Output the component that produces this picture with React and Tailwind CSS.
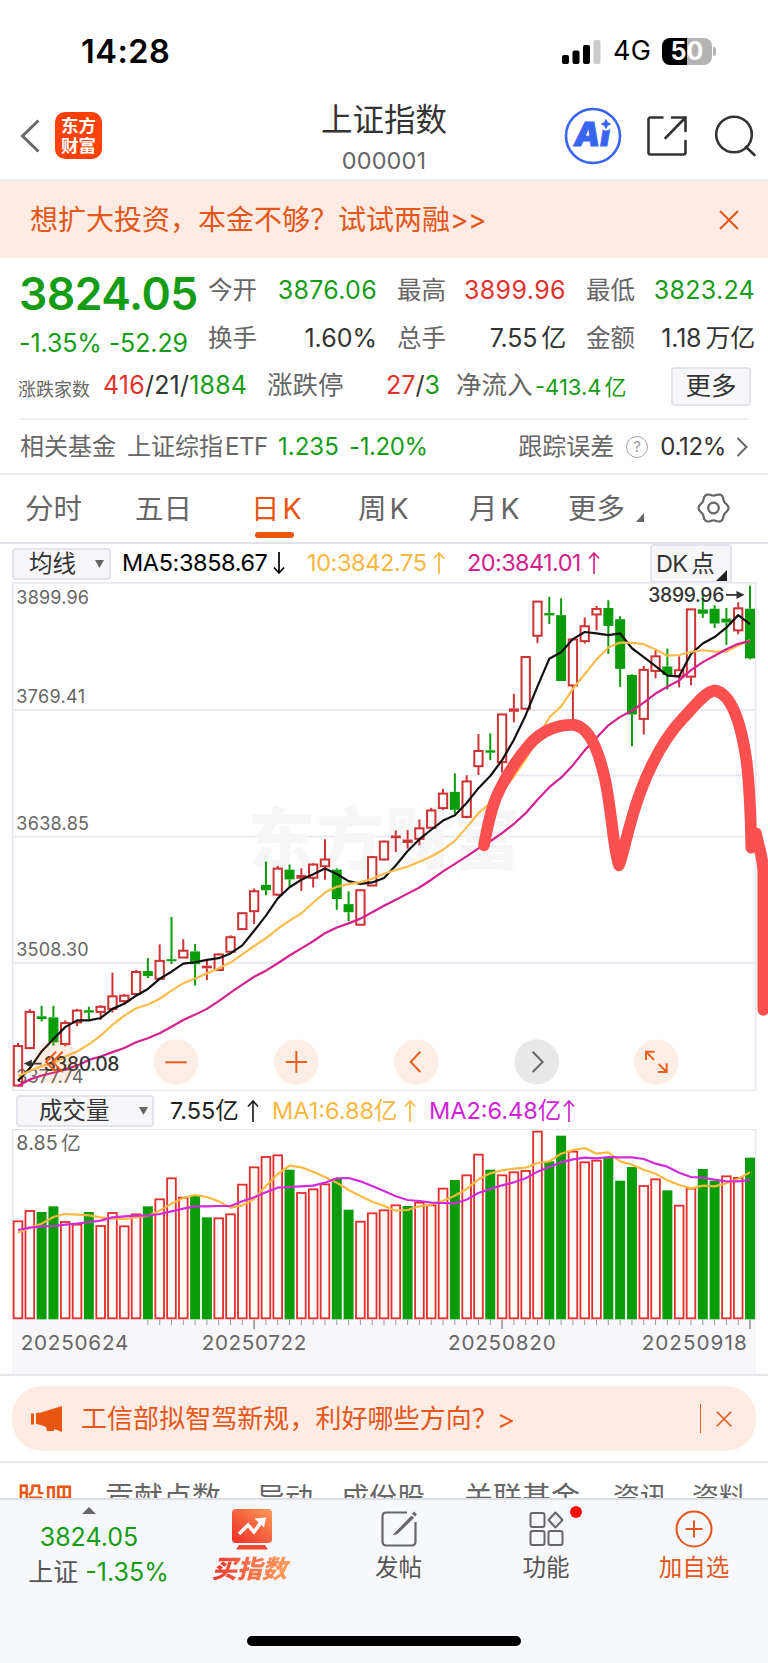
import React from "react";

// chart units: 3 per screen pixel
const STEP = 35.42;
const cx = (i) => 54 + STEP * i;

// [up, high, bodyTop, bodyBottom, low]
const candles = [
  [1, 1400, 1408, 1526, 1526], [1, 1300, 1307, 1415, 1418], [0, 1290, 1321, 1329, 1336],
  [0, 1290, 1324, 1398, 1408], [1, 1333, 1340, 1403, 1410], [1, 1299, 1303, 1339, 1350],
  [0, 1293, 1303, 1310, 1329], [1, 1288, 1292, 1308, 1332], [1, 1192, 1261, 1299, 1310],
  [1, 1255, 1259, 1276, 1288], [1, 1184, 1189, 1255, 1255], [0, 1149, 1187, 1202, 1208],
  [1, 1108, 1156, 1210, 1210], [0, 1027, 1152, 1158, 1166], [1, 1093, 1126, 1147, 1147],
  [0, 1107, 1129, 1167, 1230], [1, 1155, 1171, 1179, 1214], [1, 1135, 1137, 1184, 1184],
  [1, 1081, 1086, 1130, 1130], [1, 1013, 1015, 1063, 1063], [1, 943, 950, 1010, 1048],
  [0, 863, 932, 948, 963], [1, 876, 883, 961, 965], [0, 872, 887, 916, 937],
  [1, 883, 903, 914, 950], [1, 868, 871, 911, 940], [1, 797, 856, 877, 917],
  [0, 883, 887, 974, 1006], [0, 951, 989, 1013, 1040], [1, 946, 947, 1050, 1050],
  [1, 848, 849, 934, 934], [1, 801, 803, 857, 860], [1, 771, 786, 794, 835],
  [1, 770, 798, 808, 825], [1, 739, 764, 796, 815], [1, 704, 711, 763, 763],
  [1, 648, 661, 705, 710], [0, 602, 657, 710, 722], [1, 608, 625, 731, 735],
  [1, 486, 535, 581, 607], [0, 484, 534, 541, 563], [1, 427, 427, 569, 600],
  [1, 367, 410, 420, 451], [1, 257, 257, 411, 411], [1, 93, 93, 195, 217],
  [0, 80, 128, 135, 160], [0, 84, 134, 329, 329], [1, 205, 205, 342, 450],
  [1, 141, 166, 211, 218], [1, 107, 115, 132, 179], [0, 90, 113, 166, 249],
  [0, 137, 146, 293, 346], [0, 309, 311, 428, 522], [1, 284, 295, 441, 487],
  [1, 237, 255, 299, 321], [0, 233, 286, 311, 354], [1, 256, 296, 315, 348],
  [1, 116, 116, 316, 342], [0, 72, 117, 130, 142], [0, 105, 115, 159, 172],
  [0, 113, 144, 156, 222], [1, 96, 113, 179, 191], [0, 47, 115, 262, 265],
];

const ma5 = [
  1512, 1475, 1425, 1388, 1353, 1333, 1333, 1326, 1299, 1284, 1260, 1240, 1210, 1189, 1165, 1161,
  1154, 1149, 1135, 1111, 1068, 1023, 972, 939, 917, 901, 884, 900, 921, 929, 925, 912, 875, 832,
  797, 769, 742, 726, 690, 646, 610, 563, 503, 430, 345, 263, 244, 205, 184, 188, 193, 188, 232,
  258, 285, 313, 315, 249, 218, 199, 171, 134, 161,
];
const ma10 = [
  1498, 1483, 1468, 1460, 1440, 1425, 1404, 1378, 1346, 1319, 1297, 1287, 1269, 1245, 1223, 1209,
  1194, 1179, 1162, 1138, 1113, 1090, 1062, 1038, 1016, 985, 955, 938, 930, 924, 914, 899, 888,
  878, 864, 848, 828, 802, 762, 720, 690, 655, 612, 560, 495, 437, 404, 352, 309, 265, 230, 215,
  216, 220, 236, 254, 252, 243, 238, 242, 242, 224, 208,
];
const ma20 = [
  1527, 1508, 1496, 1488, 1478, 1467, 1450, 1440, 1427, 1415, 1398, 1386, 1371, 1352, 1332, 1316,
  1299, 1276, 1251, 1227, 1204, 1186, 1164, 1141, 1120, 1099, 1075, 1058, 1046, 1032, 1013, 994,
  976, 958, 940, 917, 892, 870, 848, 824, 803, 779, 752, 720, 680, 643, 615, 578, 534, 497, 460,
  435, 417, 393, 366, 346, 327, 297, 273, 254, 235, 219, 211,
];

// [up, top]
const volumes = [
  [1, 422], [1, 391], [0, 397], [0, 380], [1, 424], [1, 432], [0, 397], [1, 436], [1, 397],
  [1, 437], [1, 401], [0, 380], [1, 356], [1, 293], [1, 351], [0, 349], [0, 413], [1, 413],
  [1, 401], [1, 312], [1, 260], [1, 229], [1, 224], [0, 270], [1, 337], [1, 326], [1, 311],
  [0, 297], [0, 390], [1, 423], [1, 398], [1, 389], [1, 374], [0, 379], [1, 366], [1, 374],
  [1, 324], [0, 301], [1, 284], [1, 222], [0, 270], [1, 284], [1, 275], [1, 271], [1, 153],
  [0, 245], [0, 168], [1, 213], [1, 245], [1, 240], [0, 234], [0, 303], [0, 262], [1, 316],
  [1, 296], [0, 332], [1, 375], [1, 324], [0, 268], [0, 303], [1, 287], [1, 292], [0, 234],
];
const volMa1 = [
  458, 443, 431, 411, 402, 404, 406, 412, 416, 417, 412, 408, 392, 371, 354, 345, 351, 364, 383,
  376, 357, 318, 282, 257, 262, 275, 291, 308, 330, 348, 365, 377, 392, 390, 379, 374, 362, 347,
  327, 298, 280, 271, 266, 263, 249, 244, 221, 210, 204, 221, 217, 244, 254, 269, 281, 301, 315,
  325, 317, 319, 310, 296, 277,
];
const volMa2 = [
  450, 443, 439, 438, 434, 431, 426, 422, 412, 409, 407, 407, 402, 394, 386, 379, 379, 378, 378,
  364, 352, 337, 323, 321, 319, 317, 308, 295, 294, 304, 318, 333, 349, 360, 363, 368, 369, 370,
  359, 339, 327, 316, 307, 295, 275, 261, 247, 238, 233, 235, 231, 232, 232, 237, 251, 260, 278,
  291, 293, 299, 304, 304, 300,
];

const points = (arr) => arr.map((y, i) => `${cx(i)},${y}`).join(" ");

// six-lobed outline of the settings icon
const gear = Array.from({ length: 72 }, (_, i) => {
  const a = (i * Math.PI) / 36;
  const r = 13.7 + 1.3 * Math.cos(6 * a);
  return `${16 + r * Math.cos(a)},${16 + r * Math.sin(a)}`;
}).join(" ");

function Line({ data, color }) {
  return (
    <polyline points={points(data)} fill="none" stroke={color} strokeWidth="6.5" strokeLinejoin="round" />
  );
}

function Candle({ i, c }) {
  const [up, hi, top, bottom, lo] = c;
  const x = cx(i);
  const flat = bottom - top < 13;
  const color = up ? "#cc3335" : "#0a9d09";
  return (
    <g stroke={color} strokeWidth="6">
      <line x1={x} x2={x} y1={hi} y2={top} />
      <line x1={x} x2={x} y1={bottom} y2={lo} />
      {up && !flat ? (
        <rect x={x - 12.5} y={top + 1} width="25" height={bottom - top - 1} fill="none" />
      ) : (
        <rect x={x - 15} y={top} width="30" height={bottom - top} fill={color} stroke="none" />
      )}
    </g>
  );
}

function Arrow({ down, className }) {
  return (
    <svg viewBox="0 0 12 22" className={"w-3 h-[22px] shrink-0 " + className} fill="none" stroke="currentColor" strokeWidth="1.7">
      <path d={down ? "M6 0v20.5M1 15.5l5 5.500 5-5.500" : "M6 22V1.500M1 6.500L6 1l5 5.500"} />
    </svg>
  );
}

function Close({ className }) {
  return (
    <svg viewBox="0 0 20 20" className={"shrink-0 " + className} fill="none" stroke="#e3571a" strokeWidth="2">
      <path d="M1 1l18 18M19 1L1 19" />
    </svg>
  );
}

function StatusBar() {
  return (
    <div className="h-[88px] pt-[30px] pl-[81px] pr-[52px] flex items-start justify-between text-black">
      <span className="text-[32.5px] leading-[44px] font-semibold tracking-[0.5px]">14:28</span>
      <div className="flex items-center h-[43px]">
        <svg viewBox="0 0 39 24" className="w-[39px] h-6">
          <rect x="0" y="15" width="7" height="9" rx="2" />
          <rect x="10.5" y="10.5" width="7" height="13.5" rx="2" />
          <rect x="21" y="5" width="7" height="19" rx="2" />
          <rect x="31.5" y="0" width="7" height="24" rx="2" fill="#cbcbcb" />
        </svg>
        <span className="ml-3 w-[49px] text-[27px] tracking-[0.2px]">4G</span>
        <div className="w-[50px] h-[27px] rounded-[8px] bg-linear-to-r from-black from-50% to-[#b4b4b4] to-50% text-white text-[25px] leading-[27px] font-bold text-center">
          50
        </div>
        <div className="ml-[1px] w-[3px] h-[9px] rounded-r-full bg-[#b4b4b4]" />
      </div>
    </div>
  );
}

function Header() {
  return (
    <div className="h-[93px] border-b-2 border-[#f0edf0] flex">
      <div className="w-[280px] pl-[20px] pt-[24px] flex">
        <svg viewBox="0 0 20 34" className="w-5 h-[34px] mt-[7px]" fill="none" stroke="#6a6a6a" strokeWidth="3">
          <path d="M18.5 1.5L2.5 17l16 15.5" />
        </svg>
        <div className="ml-[15px] w-[47px] h-[47px] rounded-[10px] bg-[#fe4207] text-white text-[17.5px] leading-[19.5px] font-bold text-center pt-[4px]">
          东方
          <br />
          财富
        </div>
      </div>
      <div className="w-[208px] pt-[9px] text-center">
        <div className="text-[31.5px] leading-[46px] text-[#333]">上证指数</div>
        <div className="text-[23.5px] leading-[36px] text-[#666] tracking-[0.1px]">000001</div>
      </div>
      <div className="flex-1 flex pt-[19px] pl-[76px]">
        <svg viewBox="0 0 58 58" className="w-[58px] h-[58px]">
          <circle cx="29" cy="29" r="27" fill="none" stroke="#3864f0" strokeWidth="2.6" />
          <text x="10" y="39" fontSize="33" fontWeight="900" fontStyle="italic" fill="#3864f0" stroke="#3864f0" strokeWidth="0.8" textLength="36">
            Ai
          </text>
          <circle cx="42" cy="17" r="6.500" fill="#fff" />
          <path d="M42 12.500l1.500 3 3 1.500-3 1.500-1.500 3-1.500-3-3-1.500 3-1.500z" fill="#3864f0" stroke="#3864f0" />
        </svg>
        <svg viewBox="0 0 40 40" className="w-10 h-10 mt-[9px] ml-[25px]" fill="none" stroke="#333" strokeWidth="2.6" strokeLinecap="round">
          <path d="M15.500 1.500H3.500a2 2 0 0 0-2 2v33a2 2 0 0 0 2 2h33a2 2 0 0 0 2-2V25M38.500 15V1.500H25M38.500 1.500L18.500 22" />
        </svg>
        <svg viewBox="0 0 42 42" className="w-[42px] h-[42px] mt-[8px] ml-[28px]" fill="none" stroke="#333" strokeWidth="2.6" strokeLinecap="round">
          <circle cx="19" cy="19.500" r="17.800" />
          <path d="M31 32l8.500 8" />
        </svg>
      </div>
    </div>
  );
}

function Stat({ label, value, color, unit }) {
  return (
    <div className="flex justify-between">
      <span className="text-[#666] text-[24.500px]">{label}</span>
      <span className={color}>
        {value}
        {unit && <span className="ml-1">{unit}</span>}
      </span>
    </div>
  );
}

function Quote() {
  return (
    <div className="h-[217px] border-b-2 border-[#ececf0] text-[25px]">
      <div className="flex h-[106px] pl-[19px] pr-[13px]">
        <div className="w-[189px] text-[#159c15]">
          <div className="text-[44.500px] leading-[56px] pt-[8px] font-semibold tracking-[-0.500px]">3824.05</div>
          <div className="leading-[36px] mt-[3px] whitespace-nowrap tracking-[-0.100px]">-1.35% -52.29</div>
        </div>
        <div className="w-[547px] pt-[14px] grid grid-cols-[169px_169px_169px] gap-x-5 content-start leading-[36px] gap-y-[12px] whitespace-nowrap">
          <Stat label="今开" value="3876.06" color="text-[#159c15] tracking-[0.300px]" />
          <Stat label="最高" value="3899.96" color="text-[#e0322c] tracking-[0.400px]" />
          <Stat label="最低" value="3823.24" color="text-[#159c15] tracking-[0.300px]" />
          <Stat label="换手" value="1.60%" color="text-[#333]" />
          <Stat label="总手" value="7.55" unit="亿" color="text-[#333] tracking-[-0.200px]" />
          <Stat label="金额" value="1.18" unit="万亿" color="text-[#333] tracking-[-0.200px]" />
        </div>
      </div>
      <div className="flex h-[54px] pl-[18px] leading-[36px] pt-[3px] whitespace-nowrap">
        <span className="w-[85px] text-[18px] leading-[46px] text-[#666]">涨跌家数</span>
        <span className="w-[164px] tracking-[0.200px] text-[#333]">
          <b className="font-normal text-[#e0322c]">416</b>/21/<b className="font-normal text-[#159c15]">1884</b>
        </span>
        <span className="w-[119px] text-[25.500px] text-[#666]">涨跌停</span>
        <span className="w-[70px] text-[#333]">
          <b className="font-normal text-[#e0322c]">27</b>/<b className="font-normal text-[#159c15]">3</b>
        </span>
        <span className="w-[79px] text-[25.500px] text-[#666]">净流入</span>
        <span className="w-[136px] text-[22px] leading-[41px] text-[#159c15]">
          -413.4<span className="ml-[3px]">亿</span>
        </span>
        <span className="w-[80px] h-[39px] rounded-[4px] border-2 border-[#e2e4ec] bg-[#f7f7fa] text-[25.500px] leading-[34px] text-center text-[#333]">
          更多
        </span>
      </div>
      <div className="mx-5 h-[55px] border-t-2 border-[#efeff2] flex items-center text-[24px] text-[#666] whitespace-nowrap">
        <span className="w-[107px]">相关基金</span>
        <span className="w-[151px]">
          上证综指<span className="ml-[2px] tracking-[-0.500px]">ETF</span>
        </span>
        <span className="w-[71px] text-[#159c15]">1.235</span>
        <span className="text-[#159c15] tracking-[-0.400px]">-1.20%</span>
        <span className="ml-auto">跟踪误差</span>
        <span className="ml-[12px] w-[22px] h-[22px] rounded-full border-[1.500px] border-[#a5a5a5] text-[#999] text-[15px] leading-[19px] text-center">?</span>
        <span className="ml-3 text-[#333] tracking-[-0.300px]">0.12%</span>
        <svg viewBox="0 0 12 20" className="ml-[10px] w-3 h-5" fill="none" stroke="#666" strokeWidth="2">
          <path d="M1.500 1l9 9-9 9" />
        </svg>
      </div>
    </div>
  );
}

function Tabs() {
  return (
    <div className="h-[69px] border-b-2 border-[#dfe0ea] flex text-[28.500px] leading-[67px] text-[#666] whitespace-nowrap">
      <span className="w-[110px] ml-[25px]">分时</span>
      <span className="w-[116px]">五日</span>
      <div className="w-[107px] text-[#e8560f]">
        <div className="h-[57px]">
          日<span className="ml-[3px]">K</span>
        </div>
        <div className="ml-1 w-[39px] h-[6px] rounded-full bg-[#e8560f]" />
      </div>
      <span className="w-[111px]">
        周<span className="ml-[3px]">K</span>
      </span>
      <span className="w-[99px]">
        月<span className="ml-[3px]">K</span>
      </span>
      <span className="w-[68px]">更多</span>
      <svg viewBox="0 0 8 9" className="w-2 h-[9px] mt-[38px]" fill="#666">
        <path d="M8 0v9H0z" />
      </svg>
      <svg viewBox="0 0 32 32" className="w-[33px] h-8 ml-[53px] mt-[17px]" fill="none" stroke="#666" strokeWidth="2.200">
        <polygon points={gear} />
        <circle cx="16" cy="16" r="5.300" />
      </svg>
    </div>
  );
}

function Indicators() {
  return (
    <div className="h-[38px] flex text-[23.500px] leading-[38px] whitespace-nowrap">
      <div className="ml-3 mt-1 w-[99px] h-[32px] rounded-[4px] border-2 border-[#e2e4ec] bg-[#f7f7fa] flex items-center text-[#333]">
        <span className="ml-[15px] w-[66px]">均线</span>
        <svg viewBox="0 0 9 8" className="w-[9px] h-2" fill="#666">
          <path d="M0 0h9L4.500 8z" />
        </svg>
      </div>
      <span className="ml-[11px] w-[151px] text-black tracking-[-0.400px]">MA5:3858.67</span>
      <Arrow down className="mt-[8px] text-black" />
      <span className="ml-[22px] w-[126px] text-[#f8b741] tracking-[-0.400px]">10:3842.75</span>
      <Arrow className="mt-[8px] text-[#f8b741]" />
      <span className="ml-[22px] w-[121px] text-[#d41f8d] tracking-[-0.600px]">20:3841.01</span>
      <Arrow className="mt-[8px] text-[#d41f8d]" />
      <div className="ml-[50px] w-[82px] h-[39px] rounded-[4px] border-2 border-[#e2e4ec] bg-[#f7f7fa] flex text-[#333]">
        <span className="ml-1 w-[60px] leading-[36px] tracking-[-0.700px]">
          DK<span className="ml-1">点</span>
        </span>
        <svg viewBox="0 0 11 11" className="w-[11px] h-[11px] mt-[24px]" fill="#222">
          <path d="M11 0v11H0z" />
        </svg>
      </div>
    </div>
  );
}

function PriceChart() {
  return (
    <svg viewBox="0 36 2304 1506" preserveAspectRatio="none" className="block w-[768px] h-[509px]">
      <g stroke="#e8e8f1" strokeWidth="5" fill="none">
        <rect x="38" y="38.500" width="2229" height="1502" />
        <path d="M38 415H2267M38 789H2267M38 1163H2267M1400 608H2267" />
      </g>
      <text x="745" y="871" fontSize="200" fontWeight="900" fill="#f6f6f7" textLength="815">东方财富</text>

      <g fontSize="54" fill="#666">
        <text x="49" y="100" textLength="218">3899.96</text>
        <text x="49" y="395" textLength="206">3769.41</text>
        <text x="49" y="769" textLength="218">3638.85</text>
        <text x="49" y="1144" textLength="217">3508.30</text>
        <text x="49" y="1518" textLength="201">3377.74</text>
      </g>

      {candles.map((c, i) => (
        <Candle key={i} i={i} c={c} />
      ))}
      <Line data={ma5} color="#111" />
      <Line data={ma10} color="#fbbc4b" />
      <Line data={ma20} color="#d5208f" />

      <g fontSize="58" fontWeight="500" fill="#333">
        <text x="1945" y="95" textLength="228">3899.96</text>
        <text x="131" y="1483" textLength="227">3380.08</text>
      </g>
      <g stroke="#333" strokeWidth="5" fill="#333">
        <path d="M2178 74H2220M125 1461H85" />
        <path d="M2212 66L2228 74L2212 82zM93 1453L77 1461L93 1469z" />
      </g>

      {/* toolbar */}
      <g fill="#f0742c" fillOpacity="0.12">
        <circle cx="168" cy="1456" r="67" />
        <circle cx="528" cy="1456" r="67" />
        <circle cx="889" cy="1456" r="67" />
        <circle cx="1249" cy="1456" r="67" />
        <circle cx="1610" cy="1456" r="67" fill="#222" fillOpacity="0.1" />
        <circle cx="1969" cy="1456" r="67" />
      </g>
      <g stroke="#e8601f" strokeWidth="6" fill="none">
        <path d="M168 1426L138 1456L168 1486M188 1426L158 1456L188 1486" />
        <path d="M496 1457H560" />
        <path d="M857 1456H921M889 1424V1488" />
        <path d="M1261 1426L1232 1456L1261 1486" />
        <path d="M1598 1426L1628 1456L1598 1486" stroke="#666" />
        <path d="M1938 1450V1426H1964M1938 1426L1962 1450M1974 1486H2000V1460M2000 1486L1976 1462" />
      </g>

      <g stroke="#fb5050" strokeWidth="35" strokeLinecap="round" strokeLinejoin="round" fill="none">
        <path d="M1452 815C1462 760 1472 710 1492 665C1520 605 1555 555 1590 515C1630 472 1680 458 1722 459C1770 466 1797 540 1815 620C1835 710 1840 830 1857 874C1874 830 1880 770 1920 660C1950 580 1990 500 2050 438C2085 402 2115 362 2142 357C2192 362 2222 450 2238 555C2250 640 2252 720 2254 822" />
        <path d="M2268 780C2276 820 2289 850 2290 895V1302" />
      </g>
    </svg>
  );
}

function VolumeHeader() {
  return (
    <div className="h-[38px] flex text-[23.500px] leading-[40px] whitespace-nowrap">
      <div className="ml-[16px] mt-[4px] w-[138px] h-[32px] rounded-[4px] border-2 border-[#e2e4ec] bg-[#f7f7fa] flex items-center text-[#333]">
        <span className="ml-[21px] w-[100px]">成交量</span>
        <svg viewBox="0 0 9 8" className="w-[9px] h-2" fill="#666">
          <path d="M0 0h9L4.500 8z" />
        </svg>
      </div>
      <span className="ml-4 w-[77px] text-[#222]">7.55亿</span>
      <Arrow className="mt-[9px] text-[#222]" />
      <span className="ml-[13px] w-[132px] text-[#f8b741]">MA1:6.88亿</span>
      <Arrow className="mt-[9px] text-[#f8b741]" />
      <span className="ml-[13px] w-[134px] text-[#cf23d8]">MA2:6.48亿</span>
      <Arrow className="mt-[9px] text-[#cf23d8]" />
    </div>
  );
}

function VolumeChart() {
  return (
    <svg viewBox="0 147 2304 735" className="block w-[768px] h-[245px]">
      <rect x="36" y="717" width="2232" height="165" fill="#f7f7fa" />
      <path d="M38 717V149H2267V717" fill="none" stroke="#e5e5ec" strokeWidth="4" />
      {volumes.map(([up, top], i) =>
        up ? (
          <rect key={i} x={cx(i) - 13} y={top + 2} width="26" height={713 - top} fill="#fff" stroke="#e3302f" strokeWidth="5.5" />
        ) : (
          <rect key={i} x={cx(i) - 15} y={top - 1} width="30" height={719 - top} fill="#0a9d09" />
        )
      )}
      {volumes.map((v, i) => {
        if (i < 11) return null;
        const major = i === 20 || i === 41 || i === 62;
        return (
          <line key={i} x1={cx(i)} x2={cx(i)} y1="719" y2={major ? 747 : 735} stroke="#999" strokeWidth={major ? 5 : 3} />
        );
      })}
      <Line data={volMa1} color="#fbb940" />
      <Line data={volMa2} color="#d32bdc" />
      <g fontSize="59" fill="#666">
        <text x="49" y="209" textLength="124">8.85</text>
        <text x="183" y="209">亿</text>
        <g fontSize="62">
          <text x="62" y="810" textLength="323">20250624</text>
          <text x="605" y="810" textLength="314">20250722</text>
          <text x="1344" y="810" textLength="323">20250820</text>
          <text x="1925" y="810" textLength="315">20250918</text>
        </g>
      </g>
    </svg>
  );
}

function Promo() {
  return (
    <div className="h-[89px] border-y-2 border-[#e6e6ea] pt-[10px] px-3">
      <div className="h-[65px] rounded-[30px] bg-[#feebe3] flex items-center text-[26px] text-[#e3571a] whitespace-nowrap">
        <svg viewBox="0 0 31 26" className="ml-[19px] w-[31px] h-[26px]" fill="#e8560f">
          <path d="M0 7.500h3v11H0zM5 7l5-.500L31 0v26l-5-2-3-1v2h-7l-1-4-5-2-5-1z" />
        </svg>
        <span className="ml-[19px] tracking-[0.050px]">工信部拟智驾新规，利好哪些方向？</span>
        <svg viewBox="0 0 14 14" className="ml-[1px] w-[14px] h-[14px] mt-1" fill="none" stroke="currentColor" strokeWidth="2">
          <path d="M1 1l12 6-12 6" />
        </svg>
        <div className="ml-auto w-[1.500px] h-[29px] bg-[#e3571a]" />
        <Close className="ml-[15px] mr-[24px] w-4 h-4" />
      </div>
    </div>
  );
}

function SubTabs() {
  return (
    <div className="h-[35px] overflow-hidden flex pl-[17px] pt-[14px] text-[28px] leading-[42px] text-[#666] whitespace-nowrap">
      <span className="w-[88px] text-[#e8560f] font-medium">股吧</span>
      <span className="w-[152px] text-[29px]">贡献点数</span>
      <span className="w-[84px]">异动</span>
      <span className="w-[123px]">成份股</span>
      <span className="w-[149px] text-[29px]">关联基金</span>
      <span className="w-[79px] text-[27px]">资讯</span>
      <span className="text-[27px]">资料</span>
    </div>
  );
}

function BottomBar() {
  return (
    <div className="h-[165px] border-t-2 border-[#dddfe6] bg-[#f7f8fb] text-[23.500px] text-[#555] whitespace-nowrap">
      <div className="flex h-[136px]">
        <div className="w-[178px] flex flex-col items-center pt-[7px]">
          <svg viewBox="0 0 14 7" className="w-[14px] h-[7px]" fill="#666">
            <path d="M0 7L7 0l7 7z" />
          </svg>
          <span className="mt-[5px] leading-[36px] text-[25px] text-[#159c15]">3824.05</span>
          <span className="leading-[34px] ml-[19px] text-[25px]">
            上证 <span className="text-[#159c15]">-1.35%</span>
          </span>
        </div>
        <div className="w-[147px] flex flex-col items-center pt-[9px]">
          <svg viewBox="0 0 40 41" className="w-10 h-[41px]">
            <defs>
              <linearGradient id="buy" x1="0" y1="1" x2="1" y2="0">
                <stop offset="0" stopColor="#f02a25" />
                <stop offset="1" stopColor="#fb9a59" />
              </linearGradient>
            </defs>
            <rect width="40" height="34" rx="4" fill="url(#buy)" />
            <path d="M7 36h26l3 4.500H4z" fill="#ee4a35" />
            <path d="M7 25l9-9 6 7 8-11" fill="none" stroke="#fff" strokeWidth="3.500" />
            <path d="M22.500 9.500L34 8.500l-2 10z" fill="#fff" />
          </svg>
          <span className="mt-[3px] leading-[32px] text-[25px] font-black italic pr-1 bg-linear-to-r from-[#e93030] to-[#ffa060] bg-clip-text text-transparent">
            买指数
          </span>
        </div>
        <div className="w-[147px] flex flex-col items-center pt-[11px]">
          <svg viewBox="0 0 36 36" className="w-9 h-9" fill="none" stroke="#666" strokeWidth="2.200">
            <path d="M26 1.500H5A3.500 3.500 0 0 0 1.500 5v26A3.500 3.500 0 0 0 5 34.500h26a3.500 3.500 0 0 0 3.500-3.500V11" />
            <path d="M13 23L30.500 5l2 2-16 15.500-3.500 1z" fill="#666" strokeWidth="1" />
            <path d="M32.500 4l2-2" strokeWidth="4" />
          </svg>
          <span className="mt-[4px] leading-[34px]">发帖</span>
        </div>
        <div className="w-[148px] flex flex-col items-center pt-[11px] relative">
          <svg viewBox="0 0 35 36" className="w-[35px] h-9" fill="none" stroke="#666" strokeWidth="2">
            <rect x="1.500" y="2" width="14" height="14" rx="2" />
            <rect x="1.500" y="20" width="14" height="14" rx="2" />
            <rect x="19.500" y="20" width="14" height="14" rx="2" />
            <path d="M26.500 1.500l7 7.500-7 7.500-7-7.500z" strokeLinejoin="round" />
          </svg>
          <span className="mt-[4px] leading-[34px]">功能</span>
          <div className="absolute left-[98px] top-[6px] w-3 h-3 rounded-full bg-[#fb0d0d]" />
        </div>
        <div className="w-[148px] flex flex-col items-center pt-[10px] text-[#e3571a]">
          <svg viewBox="0 0 38 38" className="w-[38px] h-[38px]" fill="none" stroke="currentColor" strokeWidth="2">
            <circle cx="19" cy="19" r="17.500" />
            <path d="M10.500 19h17M19 10.500v17" />
          </svg>
          <span className="mt-[3px] leading-[34px]">加自选</span>
        </div>
      </div>
      <div className="mx-auto w-[274px] h-[10px] rounded-full bg-black" />
    </div>
  );
}

function App() {
  return (
    <div className="w-[768px] h-[1663px] overflow-hidden bg-white font-[Inter,'Noto_Sans_CJK_SC',sans-serif]">
      <StatusBar />
      <Header />
      <div className="h-[77px] bg-[#feebe3] pl-[30px] pr-[29px] flex items-center justify-between text-[28px] text-[#e3571a]">
        <span>
          想扩大投资，本金不够？试试两融<span className="tracking-[-0.500px]">&gt;&gt;</span>
        </span>
        <Close className="w-5 h-5" />
      </div>
      <Quote />
      <Tabs />
      <Indicators />
      <PriceChart />
      <VolumeHeader />
      <VolumeChart />
      <Promo />
      <SubTabs />
      <BottomBar />
    </div>
  );
}

export default App;
